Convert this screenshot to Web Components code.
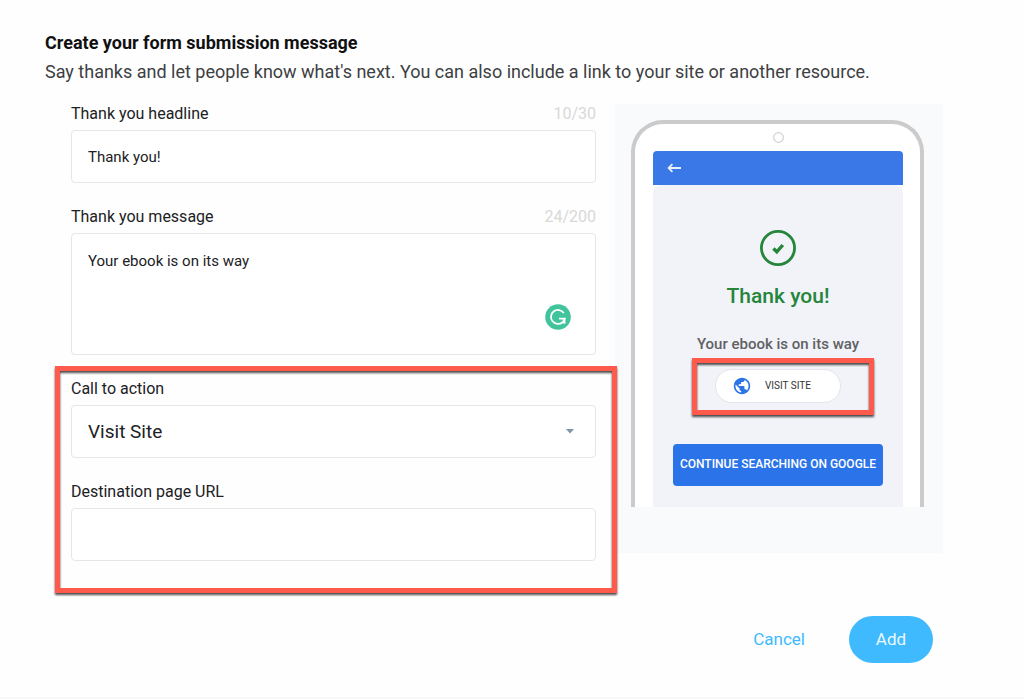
<!DOCTYPE html>
<html lang="en">
<head>
<meta charset="utf-8">
<meta name="viewport" content="width=device-width, initial-scale=1">
<title>Form submission message</title>
<style>
  body { margin: 0; background: #fefefe; color: #202124; font-family: Roboto, "Liberation Sans", sans-serif; }
</style>
</head>
<body>
<submission-editor>
  <form-field kind="input" label="Thank you headline" count="10/30" value="Thank you!"></form-field>
  <form-field kind="textarea" label="Thank you message" count="24/200" value="Your ebook is on its way">
    <writing-badge slot="badge"></writing-badge>
  </form-field>
  <highlight-group>
    <form-field kind="select" label="Call to action" value="Visit Site"></form-field>
    <form-field kind="input" label="Destination page URL"></form-field>
  </highlight-group>
  <phone-preview slot="preview">
    <span slot="headline">Thank you!</span>
    <span slot="message">Your ebook is on its way</span>
  </phone-preview>
</submission-editor>

<script>
  class BaseElement extends HTMLElement {
    render(html) {
      if (!this.shadowRoot) this.attachShadow({ mode: "open" });
      this.shadowRoot.innerHTML = html;
    }
  }

  customElements.define("submission-editor", class extends BaseElement {
    connectedCallback() {
      this.render(`
        <style>
          :host { display: flex; flex-direction: column; box-sizing: border-box; min-height: 100vh; padding: 31px 81px 34px 45px; border-bottom: 2px solid #f8f8f8; }
          h1 { margin: 0; font-size: 18px; line-height: 24px; font-weight: 700; color: #111; }
          p { margin: 5px 0 0; font-size: 18px; line-height: 24px; color: #3c4043; }
          main { display: grid; grid-template-columns: minmax(0, 1fr) 328px; align-items: start; column-gap: 19px; margin-top: 19px; padding-left: 26px; }
          .fields { display: flex; flex-direction: column; gap: 23px; }
          .preview { margin-top: 1px; }
          footer { display: flex; justify-content: flex-end; align-items: center; gap: 24px; margin: 55px 10px 0 0; }
          button { font: inherit; font-size: 17px; line-height: 23px; padding: 12px 20px; border: 0; background: none; color: #40baff; }
          button.add { min-width: 84px; border-radius: 24px; background: #40baff; color: #e9f8ff; }
        </style>
        <h1>Create your form submission message</h1>
        <p>Say thanks and let people know what's next. You can also include a link to your site or another resource.</p>
        <main>
          <div class="fields"><slot></slot></div>
          <div class="preview"><slot name="preview"></slot></div>
        </main>
        <footer>
          <button type="button">Cancel</button>
          <button type="button" class="add">Add</button>
        </footer>`);
    }
  });

  customElements.define("form-field", class extends BaseElement {
    connectedCallback() {
      const kind = this.getAttribute("kind");
      const value = this.getAttribute("value") || "";
      const count = this.getAttribute("count");
      const controls = {
        input: `<input id="control" type="text" value="${value}">`,
        textarea: `<textarea id="control">${value}</textarea>`,
        select: `<select id="control"><option>${value}</option></select>
          <svg class="arrow" width="10" height="5" viewBox="0 0 10 5" aria-hidden="true"><path d="M1 0h8L5 4.500z" fill="#8094a8"/></svg>`
      };
      this.render(`
        <style>
          :host { display: flex; flex-direction: column; gap: 5px; }
          .head { display: flex; justify-content: space-between; font-size: 16px; line-height: 22px; }
          .count { color: #d8d8d8; }
          .box { position: relative; }
          input, textarea, select {
            display: block; box-sizing: border-box; width: 100%; height: 53px; margin: 0; padding: 0 16px;
            border: 1px solid #e6e6e6; border-radius: 4px; background: #fff; color: #202124;
            font: inherit; font-size: 15px; line-height: 20px; outline: 0; resize: none; appearance: none;
          }
          textarea { height: 122px; padding: 17px 16px; }
          select { font-size: 19px; line-height: 24px; }
          .arrow { position: absolute; right: 21px; top: 24px; }
          slot { display: block; position: absolute; right: 25px; bottom: 25px; }
        </style>
        <div class="head"><label for="control">${this.getAttribute("label")}</label>${count ? `<span class="count">${count}</span>` : ""}</div>
        <div class="box">${controls[kind]}<slot name="badge"></slot></div>`);
    }
  });

  customElements.define("writing-badge", class extends BaseElement {
    connectedCallback() {
      this.render(`
        <style>:host { display: block; } svg { display: block; }</style>
        <svg width="26" height="26" viewBox="0 0 26 26" aria-hidden="true">
          <circle cx="13" cy="13" r="12.8" fill="#41c49b"/>
          <path d="M18.8 9A7 7 0 1 0 17.600 18.200" fill="none" stroke="#fff" stroke-width="1.800"/>
          <path d="M14 14.600H19.800L18.200 17.200" fill="none" stroke="#fff" stroke-width="1.600"/>
          <path d="M20.400 13.800V20L15.600 18.600L18.400 16.800z" fill="#fff"/>
        </svg>`);
    }
  });

  customElements.define("highlight-group", class extends BaseElement {
    connectedCallback() {
      this.render(`
        <style>
          :host { display: flex; flex-direction: column; gap: 23px; position: relative; }
          .frame { position: absolute; z-index: 1; inset: -12px -21px -32px -16px; border: 5px solid #ff5a4c; filter: drop-shadow(0 2px 1px rgba(0,0,0,.7)); pointer-events: none; }
        </style>
        <slot></slot>
        <div class="frame"></div>`);
    }
  });

  customElements.define("phone-preview", class extends BaseElement {
    connectedCallback() {
      this.render(`
        <style>
          :host { display: block; padding: 16px 19px 46px 16px; background: #f9fafc; }
          .phone { border: 4px solid #cbcbcb; border-bottom: 0; border-radius: 32px 32px 0 0; background: #fff; padding: 0 17px 0 18px; }
          .camera { display: flex; justify-content: center; padding: 8px 0; height: 11px; }
          .camera svg { display: block; }
          header { display: flex; align-items: center; height: 34px; padding-left: 14px; background: #3b78e7; border-radius: 4px 4px 0 0; }
          .screen { display: flex; flex-direction: column; align-items: center; height: 322px; background: #f1f3f8; border-radius: 8px 8px 0 0; box-sizing: border-box; padding-top: 44px; }
          .check { display: block; }
          h2 { margin: 16px 0 0; font-size: 21px; line-height: 26px; font-weight: 500; color: #25853b; }
          p { margin: 25px 0 0; font-size: 15px; line-height: 20px; font-weight: 500; color: #606164; }
          .visit { position: relative; margin-top: 15px; }
          .frame { position: absolute; inset: -11px -33px -12px -23px; border: 5px solid #ff5a4c; filter: drop-shadow(0 2px 1px rgba(0,0,0,.7)); pointer-events: none; }
          button { font: inherit; border: 0; }
          .site { display: flex; align-items: center; gap: 14px; width: 126px; height: 34px; padding: 0 17px; border: 1px solid #e4e5ea; border-radius: 17px; background: #fff; color: #333; font-size: 10px; line-height: 16px; }
          .go { margin-top: 41px; width: 210px; height: 42px; padding: 0 0 2px; border-radius: 4px; background: #2b73e8; color: #fff; font-size: 12px; line-height: 16px; font-weight: 500; white-space: nowrap; }
        </style>
        <div class="phone">
          <div class="camera"><svg width="11" height="11" viewBox="0 0 11 11" aria-hidden="true"><circle cx="5.5" cy="5.5" r="4.8" fill="#fff" stroke="#d2d2d2" stroke-width="1.2"/></svg></div>
          <header><svg width="14" height="10" viewBox="0 0 14 10" aria-hidden="true"><path d="M14 5H2M5.4 1.2L1.6 5L5.4 8.8" fill="none" stroke="#e8f0ff" stroke-width="1.8"/></svg></header>
          <div class="screen">
            <svg class="check" width="38" height="38" viewBox="0 0 38 38" aria-hidden="true"><circle cx="19" cy="19" r="16.6" fill="none" stroke="#25853b" stroke-width="2.8"/><path d="M14.4 19.6L17.8 22.8L23.8 16" fill="none" stroke="#25853b" stroke-width="3.4"/></svg>
            <h2><slot name="headline"></slot></h2>
            <p><slot name="message"></slot></p>
            <div class="visit">
              <button type="button" class="site">
                <svg width="18" height="18" viewBox="1 1 22 22" aria-hidden="true"><path fill="#2b73e8" d="M12 2C6.48 2 2 6.48 2 12s4.48 10 10 10 10-4.48 10-10S17.52 2 12 2zm-1 17.93c-3.95-.49-7-3.85-7-7.93 0-.62.08-1.21.21-1.79L9 15v1c0 1.1.9 2 2 2v1.93zm6.9-2.54c-.26-.81-1-1.39-1.9-1.39h-1v-3c0-.55-.45-1-1-1H8v-2h2c.55 0 1-.45 1-1V7h2c1.1 0 2-.9 2-2v-.41c2.93 1.19 5 4.06 5 7.41 0 2.08-.8 3.97-2.1 5.39z"/></svg>
                VISIT SITE
              </button>
              <div class="frame"></div>
            </div>
            <button type="button" class="go">CONTINUE SEARCHING ON GOOGLE</button>
          </div>
        </div>`);
    }
  });
</script>
</body>
</html>
